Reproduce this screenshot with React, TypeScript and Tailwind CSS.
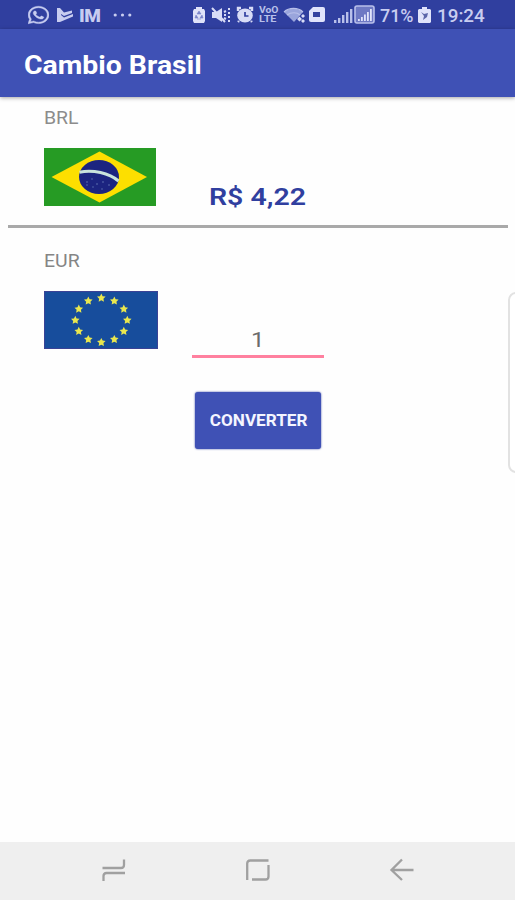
import React from 'react';
import { FaWhatsapp } from 'react-icons/fa';

const star = (cx: number, cy: number, r: number) =>
  Array.from({ length: 10 }, (_, i) => {
    const a = (Math.PI / 5) * i - Math.PI / 2;
    const d = i % 2 ? r * 0.5 : r;
    return `${cx + d * Math.cos(a)},${cy + d * Math.sin(a)}`;
  }).join(' ');

function BrazilFlag() {
  return (
    <svg className="block h-[58px] w-[112px]" viewBox="0 0 112 58">
      <rect width="112" height="58" fill="#269b24" />
      <path d="M7.5 29 55.5 3.5 103 29 55.5 54.5Z" fill="#fddf00" />
      <ellipse cx="55" cy="29" rx="20" ry="17" fill="#1c2480" />
      <path d="M35.5 24.2C49 21.5 65 25 74.5 33" fill="none" stroke="#c9e3dc" strokeWidth="3" />
      <g fill="#6577b3">
        <circle cx="43" cy="34" r=".8" /><circle cx="48" cy="31" r=".7" /><circle cx="53" cy="36" r=".8" />
        <circle cx="59" cy="34" r=".8" /><circle cx="65" cy="37" r=".8" /><circle cx="49" cy="39" r=".7" />
        <circle cx="58" cy="41" r=".7" /><circle cx="43" cy="37" r=".7" />
      </g>
    </svg>
  );
}

function EuropeFlag() {
  return (
    <svg className="block h-[58px] w-[114px]" viewBox="0 0 114 58">
      <rect width="114" height="58" fill="#174d9c" />
      <rect x=".5" y=".5" width="113" height="57" fill="none" stroke="#3a4295" />
      {Array.from({ length: 12 }, (_, i) => {
        const a = (Math.PI / 6) * i;
        return <polygon key={i} points={star(57.3 + 26 * Math.sin(a), 29.2 - 22.2 * Math.cos(a), 4.5)} fill="#eae74e" />;
      })}
    </svg>
  );
}

function Bars({ boxed = false }: { boxed?: boolean }) {
  return boxed ? (
    <svg className="ml-px h-[20px] w-[21px]" viewBox="0 0 21 20" fill="#b9c0ea">
      <rect x="1" y="1" width="19" height="17" rx="2" fill="#6f79c4" stroke="#b9c0ea" strokeWidth="1.6" />
      <path d="M4 14h1.8v2H4zM7 12h1.8v4H7zM10 9.5h1.8V16H10zM13 7h1.8v9H13zM16 4h1.8v12H16z" fill="#e0e3fb" />
    </svg>
  ) : (
    <svg className="ml-[9px] h-[20px] w-[19px]" viewBox="0 0 19 20" fill="#b9c0ea">
      <path d="M0 15h2.4v3H0zM4 13h2.4v5H4zM8 10h2.4v8H8zM12 7h2.4v11H12zM16 4h2.4v14H16z" />
    </svg>
  );
}

function StatusBar() {
  return (
    <div className="flex h-[29px] items-center bg-[#303f9f] pt-px pl-[28px] text-[#c8cdf0]">
      <FaWhatsapp className="h-[20px] w-[21px]" preserveAspectRatio="none" stroke="currentColor" strokeWidth="10" />
      <svg className="ml-[8px] h-[16px] w-[16px]" viewBox="0 0 16 16" fill="currentColor">
        <path d="M0 1h3l4 4.500 8-2V6L7 9 4 7v1l3 2.500L16 7v2.500L3 15H0Z" />
      </svg>
      <div className="ml-[6px] w-[21px]">
        <span className="block w-max origin-left scale-x-[1] text-[19px] leading-[19px] font-black tracking-[-0.5px]">IM</span>
      </div>
      <svg className="ml-[13px] h-[6px] w-[19px]" viewBox="0 0 19 6" fill="currentColor">
        <circle cx="2.2" cy="3" r="1.6" /><circle cx="9.5" cy="3" r="1.6" /><circle cx="16.8" cy="3" r="1.6" />
      </svg>
      <svg className="ml-[60px] h-[18px] w-[14px]" viewBox="0 0 14 18" fill="#dfe2f8">
        <path d="M4 1h6v2h2l1 2v10l-1 2H2l-1-2V5l1-2h2Z" />
        <path d="m7 5 2 3H5ZM4 9l2 3H3Zm6 0 1 3H8Zm-5 4h4" fill="#7884c9" stroke="#7884c9" strokeWidth=".6" />
      </svg>
      <svg className="ml-[5px] h-[18px] w-[20px]" viewBox="0 0 20 18" fill="#d8dcf6">
        <path d="M1 6h4l6-4v14l-6-4H1Z" />
        <path d="m1 2 13 14M13 6l2-1M13 9h2m-2 3 2 1M18 2v2m0 2v2m0 2v2m0 2v2" stroke="#d8dcf6" strokeWidth="2" />
      </svg>
      <svg className="ml-[5px] h-[18px] w-[18px]" viewBox="0 0 18 18">
        <path d="M2 5V2h3m8 0h3v3M3 15l-1 1m13-1 1 1" stroke="#d8dcf6" strokeWidth="2.4" fill="none" />
        <ellipse cx="9" cy="9.5" rx="7.8" ry="7" fill="#d8dcf6" />
        <path d="M9 6v4h3.5" stroke="#303f9f" strokeWidth="1.7" fill="none" />
      </svg>
      <div className="ml-[5px] w-[18px] text-[#b9c0ea]">
        <span className="block h-[9px] w-max origin-left scale-x-[1.15] text-[9px] leading-[9px] font-bold">VoO</span>
        <span className="block h-[9px] w-max origin-left scale-x-[1.2] text-[9px] leading-[9px] font-bold">LTE</span>
      </div>
      <svg className="ml-[6px] h-[18px] w-[24px]" viewBox="0 0 24 18">
        <path d="M1 6C6 1.2 15 1.2 20 6L11 16Z" fill="#9aa5dc" />
        <path d="M1 6C6 1.2 15 1.2 20 6M4 9C8 6 14 6 17 9" stroke="#b9c0ea" fill="none" strokeWidth="1.2" />
        <path d="m14 13 2.500-2.500L19 13l-2.500 2.500Zm4-3 2-2 2 2-2 2Zm0 5 2-2 2 2-2 2Z" fill="#d8dcf6" />
      </svg>
      <svg className="ml-[2px] h-[18px] w-[16px]" viewBox="0 0 16 18">
        <path d="M4 1h10q2 0 2 2v11q0 2-2 2H2q-2 0-2-2V5Z" fill="#e0e3fb" />
        <path d="M4 6h7v5H4Z" fill="#3442a0" />
      </svg>
      <Bars />
      <Bars boxed />
      <div className="ml-[5px] w-[34px]">
        <span className="block w-max origin-left scale-x-[.94] pt-px text-[19px] leading-[22px] font-medium">71%</span>
      </div>
      <svg className="ml-[4px] h-[18px] w-[13px]" viewBox="0 0 13 18">
        <path d="M4 1h5v2h3l1 1v12l-1 1H1l-1-1V4l1-1h3Z" fill="#e0e3fb" />
        <path d="m3 6 3 2 4-1-1 4-4 3 1-4Z" fill="#5b65a9" />
      </svg>
      <div className="ml-[6px] w-[48px]">
        <span className="block w-max origin-left scale-x-[.99] pt-px text-[19px] leading-[22px] font-medium">19:24</span>
      </div>
    </div>
  );
}

function NavBar() {
  return (
    <nav className="flex h-[58px] items-center bg-[#efefef] pb-[2px] pl-[101px] text-[#a0a0a0]">
      <svg className="h-[24px] w-[26px]" viewBox="0 0 26 24" fill="none" stroke="currentColor" strokeWidth="2.3">
        <path d="M1.5 10H20q3 0 3-3V1.5M24 15H5.500q-3 0-3 3v5" />
      </svg>
      <svg className="ml-[118px] h-[24px] w-[26px]" viewBox="0 0 26 24" fill="none" stroke="currentColor" strokeWidth="2.3">
        <path d="M2.200 22V5.500q0-3 3-3H23.500M23.500 7v11.500q0 3-3 3H7" />
      </svg>
      <svg className="ml-[118px] h-[24px] w-[26px]" viewBox="0 0 26 24" fill="none" stroke="currentColor" strokeWidth="2.3">
        <path d="M24.500 12H3M13 1.500 2.500 12 13 22" />
      </svg>
    </nav>
  );
}

export default function App() {
  return (
    <div className="flex h-[900px] w-[515px] flex-col overflow-hidden bg-[#fefefe] font-['Roboto','Liberation_Sans',sans-serif]">
      <StatusBar />
      <header className="relative flex h-[68px] shrink-0 items-center bg-[#3f51b5] pl-[23.500px] shadow-[0_1px_4px_rgba(0,0,0,0.35)]">
        <h1 className="origin-left scale-x-[1.135] pt-[5px] text-[25px] leading-[30px] font-bold text-white">Cambio Brasil</h1>
      </header>
      <main className="flex flex-1 items-start">
        <div className="w-[508px] shrink-0">
          <section className="h-[128px] pt-[10px] pl-[44px]">
            <p className="w-max origin-left scale-x-[1.08] text-[18px] leading-[22px] text-[#8c8c8c]">BRL</p>
            <div className="mt-[19px] flex">
              <BrazilFlag />
              <p className="mt-[37px] ml-[53px] w-max origin-left scale-x-[1.24] text-[23px] leading-[26px] font-semibold text-[#303f9f]">R$ 4,22</p>
            </div>
          </section>
          <hr className="ml-[8px] h-[3px] border-0 bg-[#a9a9a9]" />
          <section className="pt-[22px] pl-[44px]">
            <p className="w-max origin-left scale-x-[1.08] text-[18px] leading-[22px] text-[#858585]">EUR</p>
            <div className="mt-[19px] flex">
              <EuropeFlag />
              <div className="mt-[34px] ml-[34px] h-[33px] w-[132px] border-b-[3px] border-[#ff809f] text-center text-[21px] leading-[30px] text-[#6b6b6b]">
                <span className="inline-block scale-x-[1.15]">1</span>
              </div>
            </div>
            <button className="mt-[34px] ml-[151px] flex h-[57px] w-[126px] items-center justify-center rounded-[3px] bg-[#3f51b5] shadow-[0_0_2px_#303f9f]">
              <span className="scale-x-[1.07] pt-px pl-px text-[16px] font-bold text-[#f4f5ff]">CONVERTER</span>
            </button>
          </section>
        </div>
        <aside className="mt-[195px] h-[181px] w-[12px] shrink-0 rounded-l-[8px] border-2 border-[#e2e2e2] bg-white" />
      </main>
      <NavBar />
    </div>
  );
}
